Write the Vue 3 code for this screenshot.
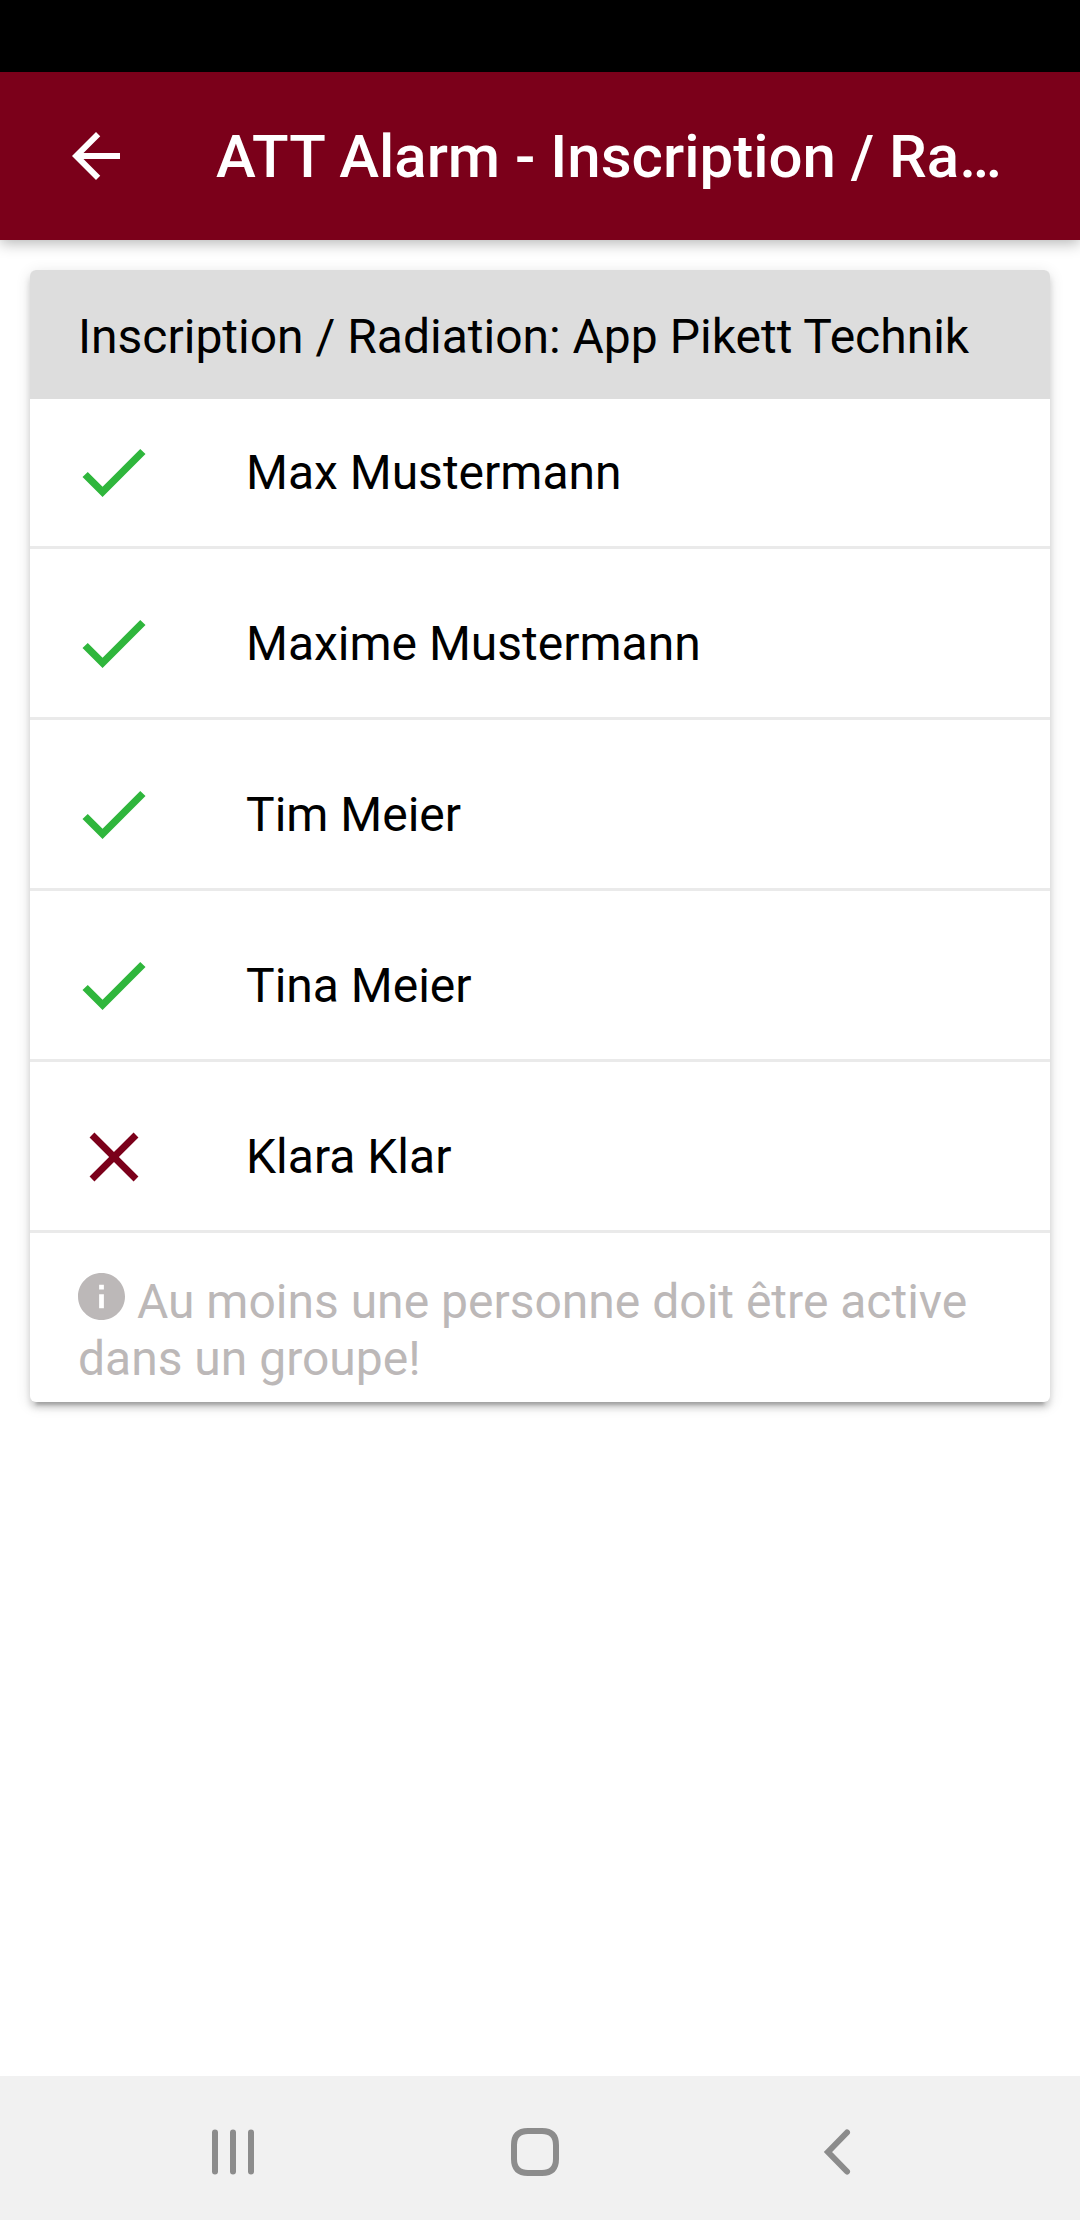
<script setup>
import { ref } from 'vue'

const people = ref([
  { name: 'Max Mustermann', active: true },
  { name: 'Maxime Mustermann', active: true },
  { name: 'Tim Meier', active: true },
  { name: 'Tina Meier', active: true },
  { name: 'Klara Klar', active: false },
])

// At least one person has to stay active in the group.
function toggle(person) {
  const activeCount = people.value.filter((p) => p.active).length
  if (person.active && activeCount === 1) return
  person.active = !person.active
}
</script>

<template>
  <div class="screen">
    <div class="status-bar"></div>

    <header class="toolbar">
      <button class="back" type="button" aria-label="Retour">
        <svg viewBox="0 0 24 24" aria-hidden="true">
          <path d="M20 11H7.83l5.59-5.59L12 4l-8 8 8 8 1.41-1.41L7.83 13H20v-2z" />
        </svg>
      </button>
      <h1 class="title">ATT Alarm - Inscription / Ra…</h1>
    </header>

    <main class="content">
      <section class="card">
        <h2 class="card-header">Inscription / Radiation: App Pikett Technik</h2>
        <ul class="people">
          <li v-for="person in people" :key="person.name">
            <button class="person" type="button" :aria-pressed="person.active" @click="toggle(person)">
              <svg v-if="person.active" class="mark mark-on" viewBox="0 0 512 512" aria-hidden="true">
                <path d="M186.301 339.893L96 249.461l-32 30.507L186.301 402 448 140.506 416 110z" />
              </svg>
              <svg v-else class="mark mark-off" viewBox="0 0 512 512" aria-hidden="true">
                <path d="M405 136.798L375.202 107 256 226.202 136.798 107 107 136.798 226.202 256 107 375.202 136.798 405 256 285.798 375.202 405 405 375.202 285.798 256z" />
              </svg>
              <span>{{ person.name }}</span>
            </button>
          </li>
        </ul>
        <p class="note">
          <svg class="info" viewBox="48 48 416 416" aria-hidden="true">
            <path d="M256 48C141.2 48 48 141.2 48 256s93.2 208 208 208 208-93.2 208-208S370.8 48 256 48zm21 312h-42V235h42v125zm0-166h-42v-42h42v42z" />
          </svg>
          Au moins une personne doit être active dans un groupe!
        </p>
      </section>
    </main>

    <nav class="nav-bar">
      <button type="button" aria-label="Applications récentes">
        <svg viewBox="0 0 48 48" aria-hidden="true">
          <path d="M6 4.5v39M24 4.5v39M42 4.5v39" />
        </svg>
      </button>
      <button type="button" aria-label="Accueil">
        <svg viewBox="0 0 48 48" aria-hidden="true">
          <path d="M17 3h14Q45 3 45 17v14Q45 45 31 45H17Q3 45 3 31V17Q3 3 17 3z" />
        </svg>
      </button>
      <button type="button" aria-label="Précédent">
        <svg viewBox="0 0 48 48" aria-hidden="true">
          <path d="M34 4.5L15 24l19 19.5" />
        </svg>
      </button>
    </nav>
  </div>
</template>

<style>
body {
  margin: 0;
  background: #fff;
}
</style>

<style scoped>
.screen {
  display: flex;
  flex-direction: column;
  min-height: 100vh;
  background: #fff;
  color: #000;
  font-family: Roboto, 'Noto Sans', sans-serif;
  font-size: 48px;
  line-height: 57px;
}

button {
  margin: 0;
  padding: 0;
  border: 0;
  background: none;
  color: inherit;
  font: inherit;
}

.status-bar {
  height: 72px;
  background: #000;
}

.toolbar {
  display: flex;
  align-items: center;
  gap: 84px;
  height: 168px;
  padding: 0 60px;
  background: #7b001a;
  color: #fff;
  box-shadow: 0 3px 14px rgba(0, 0, 0, 0.3);
}

.back {
  flex: none;
  width: 72px;
  height: 72px;
}

.back svg {
  display: block;
  fill: currentColor;
}

.title {
  flex: 1;
  min-width: 0;
  margin: 0;
  padding-top: 2px;
  overflow: hidden;
  font-size: 60px;
  font-weight: 500;
  line-height: 72px;
  text-overflow: ellipsis;
  white-space: nowrap;
}

.content {
  flex: 1;
  padding: 30px;
}

.card {
  overflow: hidden;
  border-radius: 6px;
  background: #fff;
  box-shadow:
    0 9px 3px -6px rgba(0, 0, 0, 0.2),
    0 6px 6px rgba(0, 0, 0, 0.14),
    0 3px 15px rgba(0, 0, 0, 0.12);
}

.card-header {
  margin: 0;
  padding: 38px 48px 34px;
  background: #ddd;
  font-size: 48px;
  font-weight: 400;
}

.people {
  margin: 0;
  padding: 0;
  list-style: none;
}

.people li {
  padding-top: 21px;
  border-bottom: 3px solid #eaeaea;
}

.people li:first-child {
  padding-top: 0;
}

.person {
  display: flex;
  align-items: center;
  gap: 90px;
  width: 100%;
  height: 147px;
  padding: 0 42px;
  text-align: left;
}

.mark {
  flex: none;
  width: 84px;
  height: 84px;
}

.mark-on {
  fill: #2fb63c;
}

.mark-off {
  fill: #7b001a;
}

.note {
  margin: 0;
  padding: 40px 48px 15px;
  color: #bcb8b8;
}

.info {
  width: 47px;
  height: 47px;
  fill: currentColor;
  vertical-align: -2px;
}

.nav-bar {
  display: flex;
  box-sizing: border-box;
  height: 144px;
  padding: 8px 92px 0 82px;
  background: #f1f1f1;
}

.nav-bar button {
  display: flex;
  flex: 1;
  align-items: center;
  justify-content: center;
}

.nav-bar svg {
  width: 48px;
  height: 48px;
  fill: none;
  stroke: #8c8c8c;
  stroke-width: 6px;
  stroke-linecap: round;
}
</style>
